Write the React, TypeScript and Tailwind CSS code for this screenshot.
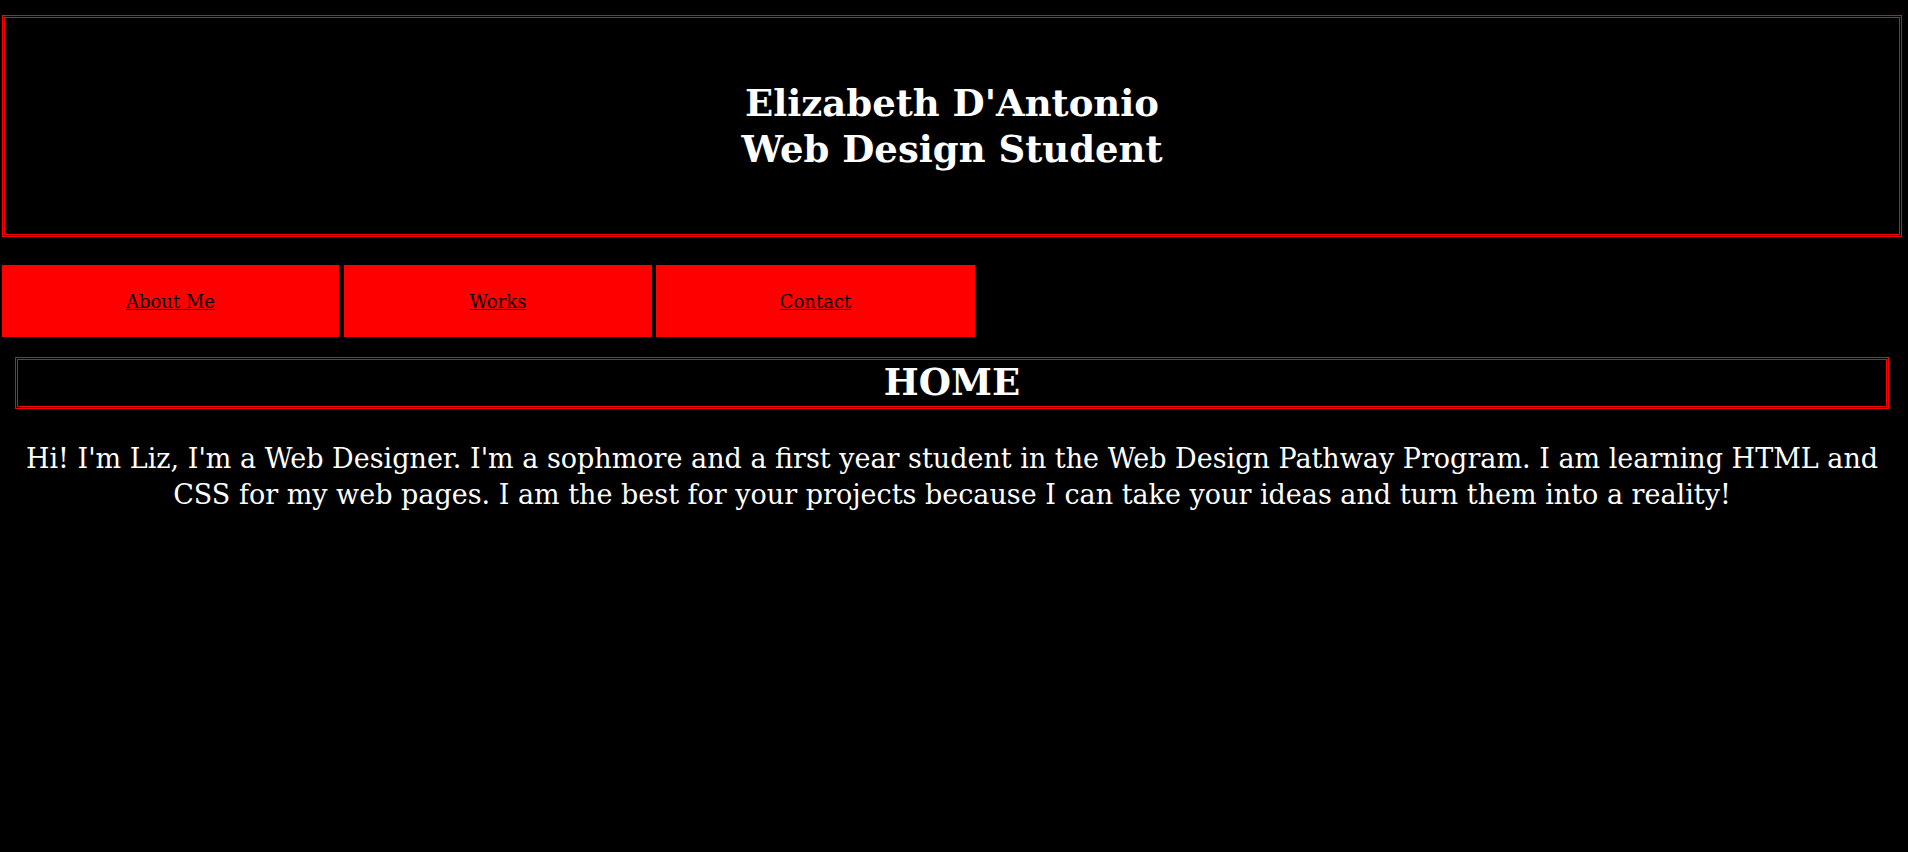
export default function App() {
  const serif = { fontFamily: '"DejaVu Serif", Georgia, serif' };

  return (
    <div className="min-h-screen w-full bg-black" style={serif}>
      <div className="w-[1904px] pt-[15px]">
        {/* banner */}
        <header className="mx-[2px] flex h-[222px] flex-col items-center justify-center border-[3px] border-double border-[#ff0000] text-center text-[37px] font-bold leading-[46px] text-white">
          <h1>Elizabeth D'Antonio</h1>
          <h1>Web Design Student</h1>
        </header>

        {/* nav */}
        <nav className="mt-[28px] ml-[2px] flex h-[72px]">
          <a href="#" className="flex w-[337px] items-center justify-center bg-[#ff0000] text-[18px] text-black underline">
            About Me
          </a>
          <a href="#" className="ml-[5px] flex w-[308px] items-center justify-center bg-[#ff0000] text-[18px] text-black underline">
            Works
          </a>
          <a href="#" className="ml-[4px] flex w-[319px] items-center justify-center bg-[#ff0000] text-[18px] text-black underline">
            Contact
          </a>
        </nav>

        <h2 className="mx-[15px] mt-[20px] flex h-[52px] items-center justify-center border-[3px] border-double border-[#ff0000] text-[37px] font-bold text-white">
          HOME
        </h2>

        <p className="mt-[32px] text-center text-[27px] leading-[36px] whitespace-nowrap text-white">
          Hi! I'm Liz, I'm a Web Designer. I'm a sophmore and a first year student in the Web Design Pathway Program. I am learning HTML and
          <br />
          CSS for my web pages. I am the best for your projects because I can take your ideas and turn them into a reality!
        </p>
      </div>
    </div>
  );
}
